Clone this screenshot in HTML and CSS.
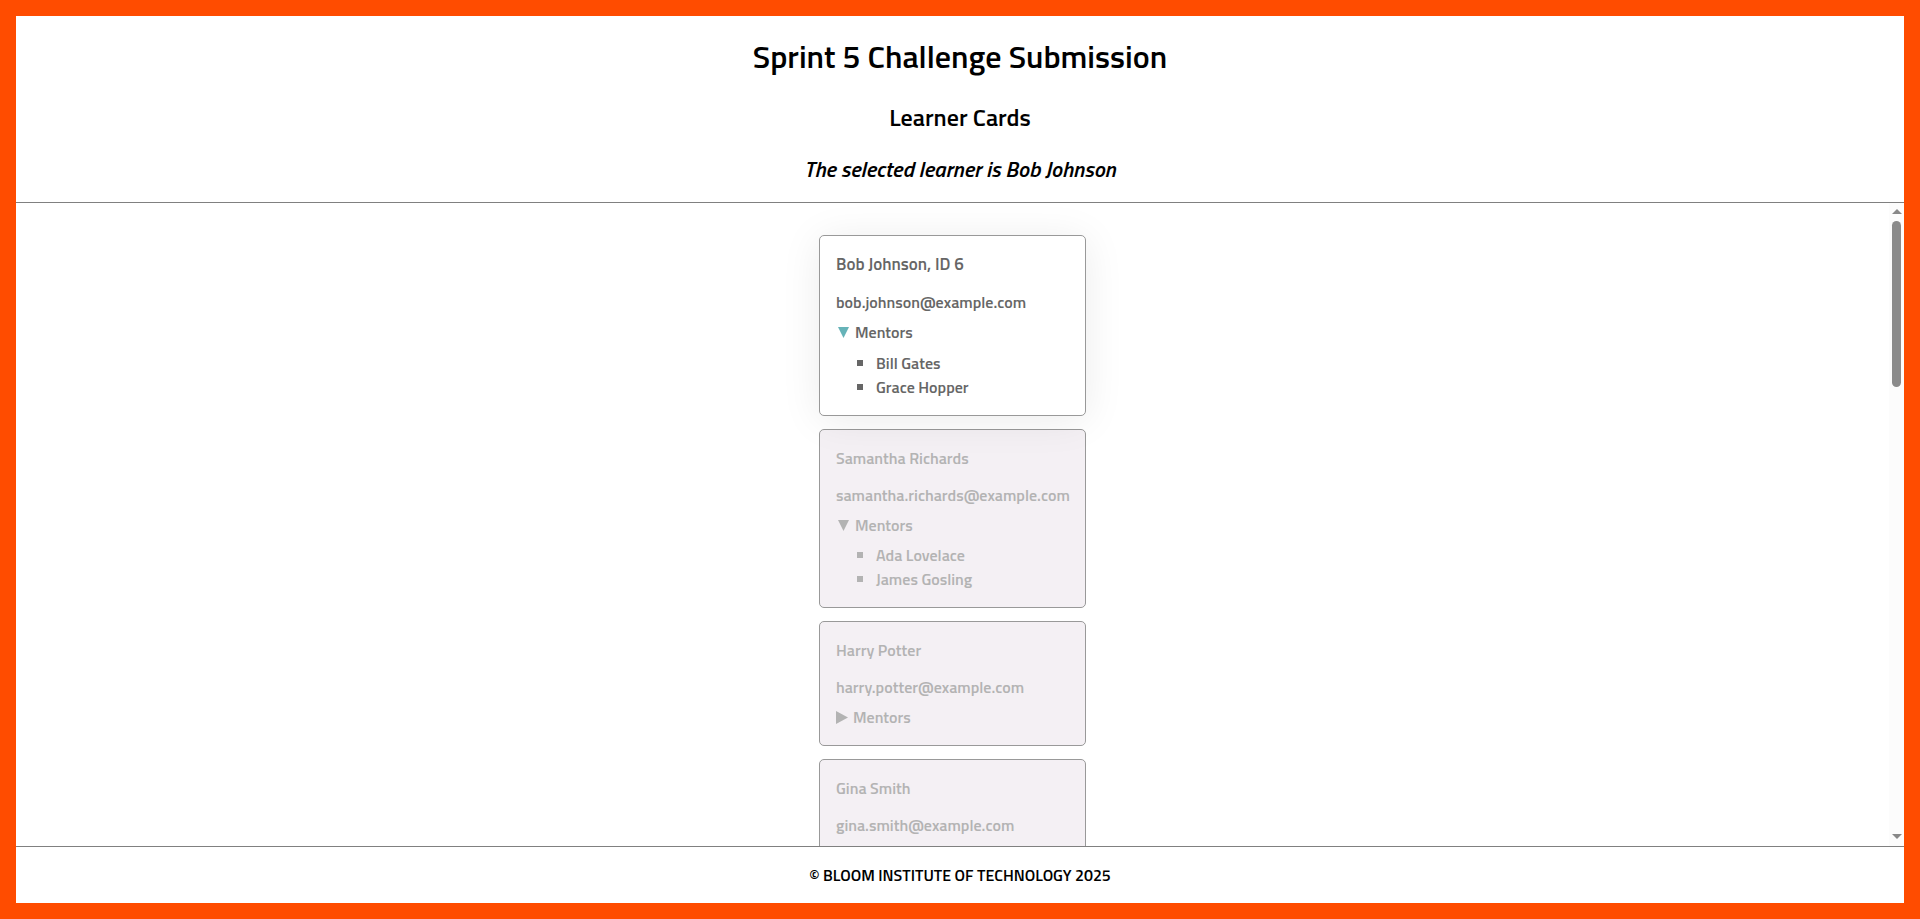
FILE: index.html
```html
<!DOCTYPE html>
<html lang="en">
<head>
<meta charset="utf-8">
<title>Sprint 5 Challenge Submission</title>
<link rel="stylesheet" href="styles.css">
</head>
<body>
<header class="page-header">
  <h1>Sprint 5 Challenge Submission</h1>
  <h2>Learner Cards</h2>
  <p class="info">The selected learner is Bob Johnson</p>
</header>
<div class="viewport">
  <main class="cards">
    <article class="card selected">
      <h3>Bob Johnson, ID 6</h3>
      <div class="email">bob.johnson@example.com</div>
      <button class="mentors open" type="button" aria-expanded="true"><svg class="down" viewBox="0 0 11 11" aria-hidden="true"><path d="M0 0H11L5.5 11Z"/></svg>Mentors</button>
      <ul><li>Bill Gates</li><li>Grace Hopper</li></ul>
    </article>
    <article class="card">
      <h3>Samantha Richards</h3>
      <div class="email">samantha.richards@example.com</div>
      <button class="mentors open" type="button" aria-expanded="true"><svg class="down" viewBox="0 0 11 11" aria-hidden="true"><path d="M0 0H11L5.5 11Z"/></svg>Mentors</button>
      <ul><li>Ada Lovelace</li><li>James Gosling</li></ul>
    </article>
    <article class="card">
      <h3>Harry Potter</h3>
      <div class="email">harry.potter@example.com</div>
      <button class="mentors" type="button" aria-expanded="false"><svg class="right" viewBox="0 0 12 13" aria-hidden="true"><path d="M0 0L12 6.5L0 13Z"/></svg>Mentors</button>
    </article>
    <article class="card">
      <h3>Gina Smith</h3>
      <div class="email">gina.smith@example.com</div>
    </article>
  </main>
  <div class="scrollbar" aria-hidden="true">
    <svg class="arrow" viewBox="0 0 10 5"><path d="M5 0L10 5H0Z"/></svg>
    <div class="track"><div class="thumb"></div></div>
    <svg class="arrow" viewBox="0 0 10 5"><path d="M0 0H10L5 5Z"/></svg>
  </div>
</div>
<footer class="page-footer">© BLOOM INSTITUTE OF TECHNOLOGY 2025</footer>
</body>
</html>
```
FILE: styles.css
```css
* { box-sizing: border-box; }

body {
  display: flex;
  flex-direction: column;
  height: 100vh;
  margin: 0;
  border: 16px solid #ff4c00;
  background: #fff;
  color: #000;
  font-family: "Titillium Web", Roboto, "Liberation Sans", sans-serif;
  font-size: 16px;
  font-weight: 600;
  line-height: 24px;
}

h1, h2, h3, p, ul { margin: 0; padding: 0; font-weight: 600; }

.page-header {
  display: flex;
  flex: none;
  flex-direction: column;
  align-items: center;
  gap: 19px;
  padding: 16px 0 18px;
  border-bottom: 1px solid #808080;
}
.page-header h1 { font-size: 32px; line-height: 48px; }
.page-header h2 { font-size: 24px; line-height: 36px; }
.page-header .info { font-size: 22px; line-height: 30px; font-style: italic; }

.viewport { display: flex; flex: 1; min-height: 0; }

.cards {
  display: flex;
  flex: 1;
  flex-direction: column;
  align-items: center;
  gap: 13px;
  padding: 32px 0;
  overflow-y: auto;
  scrollbar-width: none;
}

.card {
  flex: none;
  width: 267px;
  padding: 16px;
  border: 1px solid #999;
  border-radius: 5px;
  background: #f4f0f4;
  color: #b3b3b3;
}
.card:last-child { padding-bottom: 48px; }
.card h3 { margin-bottom: 13px; font-size: 16px; }
.card.selected {
  z-index: 1;
  background: #fff;
  color: #666;
  box-shadow: 0 4px 40px rgba(0, 0, 0, 0.08);
}
.card.selected h3 { font-size: 17px; line-height: 25px; }
.card.selected ul { margin-top: 7px; }

.mentors {
  display: flex;
  align-items: center;
  gap: 5px;
  margin-top: 6px;
  padding: 0;
  border: 0;
  background: none;
  color: inherit;
  font: inherit;
  cursor: pointer;
}
.mentors.open { gap: 6px; padding-left: 2px; }
.mentors svg { fill: currentColor; }
.down { width: 11px; height: 11px; }
.right { width: 12px; height: 13px; }
.selected .mentors svg { fill: #66b3b8; }

ul { margin-top: 6px; padding-left: 21px; list-style: none; }
li { display: flex; align-items: center; gap: 13px; }
li::before { content: ""; width: 6px; height: 6px; background: currentColor; }

.scrollbar {
  display: flex;
  flex: none;
  flex-direction: column;
  align-items: center;
  gap: 7px;
  width: 15px;
  padding: 6px 0 7px;
  background: #fcfcfc;
}
.arrow { width: 10px; height: 5px; fill: #888; }
.track { flex: 1; }
.thumb { width: 9px; height: 166px; border-radius: 5px; background: #8b8b8b; }

.page-footer {
  flex: none;
  padding: 16px 0;
  border-top: 1px solid #808080;
  text-align: center;
}
```
